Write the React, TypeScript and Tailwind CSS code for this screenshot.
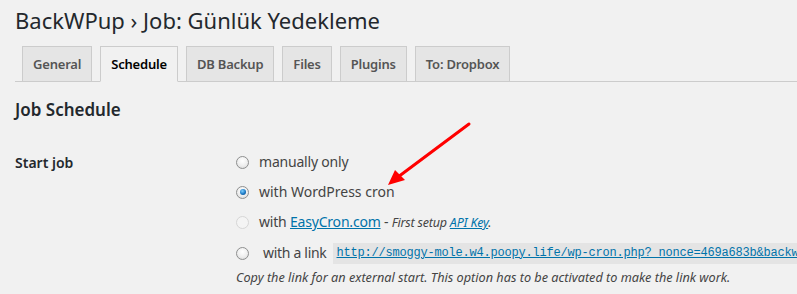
import React from "react";

const tabs = ["General", "Schedule", "DB Backup", "Files", "Plugins", "To: Dropbox"];

function Radio({ checked, disabled }: { checked?: boolean; disabled?: boolean }) {
	return (
		<span
			className={
				"relative inline-block size-[13px] shrink-0 rounded-full border " +
				(disabled
					? "border-[#d6d6d6] bg-[#f4f4f4]"
					: "border-[#8e8f8f] bg-[radial-gradient(circle_at_50%_35%,#ffffff_0%,#eeeeee_55%,#d4d4d4_100%)]")
			}
		>
			{checked && (
				<span className="absolute left-[2.5px] top-[2.5px] size-[6px] rounded-full bg-[radial-gradient(circle_at_40%_35%,#7fd0ff_0%,#1b78c4_55%,#0b3e73_100%)]" />
			)}
		</span>
	);
}

export default function App() {
	return (
		<div className="relative h-[294px] w-[797px] overflow-hidden bg-[#f1f1f1] font-['Segoe_UI','Noto_Sans',sans-serif] text-[#444]">
			<div className="pl-[15px]">
				<h1 className="pt-[6px] text-[22px] leading-[29px] text-[#23282d]">
					BackWPup › Job: Günlük Yedekleme
				</h1>

				<nav className="mt-[11px] flex border-b border-[#ccc] pl-[7px]">
					{tabs.map((t) => {
						const active = t === "Schedule";
						return (
							<span
								key={t}
								className={
									"-mb-px mr-[8px] border px-[10px] py-[5px] text-[13px] font-semibold leading-[24px] tracking-[-0.2px] " +
									(active
										? "border-[#ccc] border-b-[#f1f1f1] bg-[#f1f1f1] text-black"
										: "border-[#ccc] bg-[#e5e5e5] text-[#555]")
								}
							>
								{t}
							</span>
						);
					})}
				</nav>

				<h3 className="mt-[17px] text-[17px] font-semibold leading-[22px] text-[#23282d]">Job Schedule</h3>

				<div className="mt-[26px] flex">
					<div className="w-[221px] shrink-0 pt-[6px] text-[14px] font-semibold leading-[20px] text-[#23282d]">
						Start job
					</div>
					<div className="flex flex-col text-[14px] leading-[20px]">
						<label className="flex h-[30px] items-center gap-[10px]">
							<Radio />
							<span className="tracking-[-0.2px]">manually only</span>
						</label>
						<label className="flex h-[30px] items-center gap-[10px]">
							<Radio checked />
							<span>with WordPress cron</span>
						</label>
						<label className="flex h-[31px] items-center gap-[10px]">
							<Radio disabled />
							<span className="tracking-[-0.2px]">
								with{" "}
								<a className="text-[#0073aa] underline">EasyCron.com</a>
								{" - "}
								<em className="text-[12.5px]">
									First setup <a className="text-[#0073aa] underline">API Key</a>.
								</em>
							</span>
						</label>
						<label className="flex h-[30px] items-center gap-[10px] whitespace-nowrap">
							<Radio />
							<span className="pl-[4px] tracking-[-0.3px]">with a link</span>
							<code className="-ml-[4px] bg-[#e4e4e4] px-[4px] py-[2px] font-['Liberation_Mono',monospace] text-[12px] leading-[17px] tracking-[-0.2px]">
								<a className="text-[#0073aa] underline">
									http://smoggy-mole.w4.poopy.life/wp-cron.php?_nonce=469a683b&amp;backwpup_run=runext&amp;jobid=1
								</a>
							</code>
						</label>
						<p className="mt-0 whitespace-nowrap text-[12.7px] italic leading-[18px] text-[#444]">
							Copy the link for an external start. This option has to be activated to make the link work.
						</p>
					</div>
				</div>
			</div>

			<svg className="pointer-events-none absolute left-0 top-0" width="797" height="294">
				<line x1="469" y1="124" x2="398" y2="177" stroke="#ff0000" strokeWidth="3" strokeLinecap="round" />
				<polygon points="388,185 395,170 405,180" fill="#ff0000" />
			</svg>
		</div>
	);
}
